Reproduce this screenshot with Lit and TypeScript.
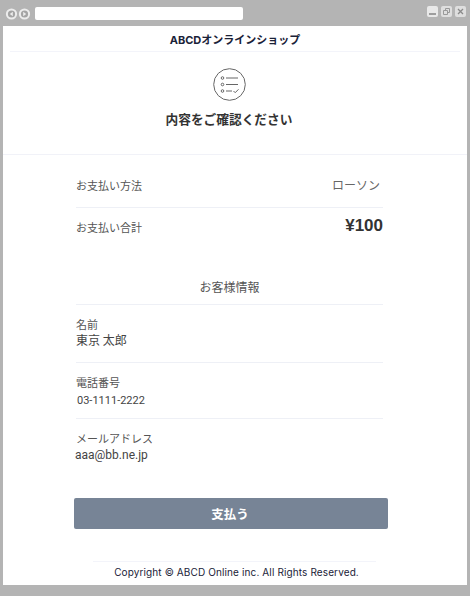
import { LitElement, html, css } from "lit";
import { customElement } from "lit/decorators.js";

@customElement("app-root")
export class AppRoot extends LitElement {
  static styles = css`
    :host { display: block; width: 470px; height: 596px; overflow: hidden; font-family: "Noto Sans CJK JP", "Liberation Sans", sans-serif; color: #555; }
    * { box-sizing: border-box; }
    .window { width: 470px; height: 596px; background: #b4b4b4; display: flex; flex-direction: column; padding: 0 3px 11px 3px; }
    .chrome { height: 26px; flex: none; display: flex; align-items: center; gap: 4px; padding: 1px 0 0 2px; }
    .nav { display: flex; gap: 0; }
    .nav svg { display: block; }
    .url { width: 208px; height: 13px; background: #fff; border-radius: 2px; }
    .ctrls { margin: -5px 0 0 auto; display: flex; gap: 3px; padding-right: 1px; }
    .ctrl { display: block; }
    .page { flex: 1; background: #fff; display: flex; flex-direction: column; min-height: 0; }
    .brand { height: 26px; margin: 0 7px; flex: none; border-bottom: 1px solid #f3f4fa; text-align: center; font: 700 11px/26px "Inter", "Noto Sans CJK JP", sans-serif; color: #1a2238; padding-top: 1px; }
    .hero { height: 103px; flex: none; border-bottom: 1px solid #f1f2f8; display: flex; flex-direction: column; align-items: center; padding: 16px 12px 0 0; }
    .hero svg { display: block; }
    .hero h1 { margin: 8px 0 0; font-size: 12.7px; line-height: 19px; font-weight: 700; color: #333; }
    .main { width: 307px; margin-left: 73px; flex: 1; display: flex; flex-direction: column; }
    .row { display: flex; justify-content: space-between; align-items: center; border-bottom: 1px solid #eef0f6; font-size: 11px; color: #555; }
    .row.one { height: 53px; padding: 7px 3px 0 0; }
    .row.one b { font-weight: 400; font-size: 12px; color: #666; }
    .row.two { height: 40px; border: 0; padding-bottom: 2px; }
    .row.two b { font: 700 17px/20px "Liberation Sans", sans-serif; color: #333; margin-top: -2px; }
    .sec { margin-top: 27px; height: 30px; border-bottom: 1px solid #eef0f6; text-align: center; font-size: 12px; line-height: 24px; color: #555; }
    .info { border-bottom: 1px solid #eef0f6; font-size: 12px; color: #444; padding-top: 12px; }
    .info .k { line-height: 15px; font-size: 11px; color: #555; }
    .info .v { line-height: 16px; }
    .info.a { height: 58px; }
    .info.b { height: 56px; padding-top: 11px; }
    .info.c { border: 0; height: 52px; padding-top: 11px; }
    .b .k, .c .k { line-height: 16px; }
    .b .v, .c .v { font: 11px/17px "Roboto", sans-serif; margin-top: 2px; color: #444; }
    .b .v { padding-left: 1px; }
    .c .v { font-size: 12px; margin: 1px 0 0 -1px; }
    .pay { width: 314px; height: 31px; margin: 27px 0 0 -2px; padding-right: 2px; border: 0; border-radius: 2px; background: #778496; color: #fff; font: 700 12.5px/31px "Noto Sans CJK JP", sans-serif; text-align: center; }
    .foot { margin: auto 0 0 90px; width: 283px; height: 24px; padding-left: 4px; flex: none; border-top: 1px solid #f3f4fa; text-align: center; font: 10px/21px "Inter", sans-serif; color: #1a2238; letter-spacing: .12px; }
  `;

  render() {
    return html`<div class="window">
      <div class="chrome">
        <div class="nav">
          <svg width="13" height="12" viewBox="0 0 13 12"><circle cx="6.5" cy="6" r="5.6" fill="#ececec"/><circle cx="6.5" cy="6" r="3.6" fill="#a4a4a4"/><path d="M7.8 3.8 4.8 6 7.8 8.2z" fill="#ececec"/></svg>
          <svg width="13" height="12" viewBox="0 0 13 12"><circle cx="6.5" cy="6" r="5.6" fill="#ececec"/><circle cx="6.5" cy="6" r="3.6" fill="#a4a4a4"/><path d="M5.2 3.8 8.2 6 5.2 8.2z" fill="#ececec"/></svg>
        </div>
        <div class="url"></div>
        <div class="ctrls">
          <svg class="ctrl" width="11" height="11" viewBox="0 0 11 11"><rect width="11" height="11" rx="2" fill="#e8e8e8"/><path d="M2 8h7" stroke="#8a8a8a" stroke-width="1.6"/></svg>
          <svg class="ctrl" width="11" height="11" viewBox="0 0 11 11"><rect width="11" height="11" rx="2" fill="#dedede"/><path d="M2.5 4.5h4v4h-4zM4.5 4.5v-2h4v4h-2" fill="none" stroke="#999"/></svg>
          <svg class="ctrl" width="11" height="11" viewBox="0 0 11 11"><rect width="11" height="11" rx="2" fill="#dedede"/><path d="M3 3l5 5M8 3l-5 5" stroke="#8a8a8a" stroke-width="1.3"/></svg>
        </div>
      </div>
      <div class="page">
        <div class="brand">ABCDオンラインショップ</div>
        <div class="hero">
          <svg width="33" height="33" viewBox="0 0 33 33" fill="none" stroke="#666">
            <circle cx="16.5" cy="16.5" r="15.8"/>
            <circle cx="9.5" cy="10" r="1.3"/><circle cx="9.5" cy="16.5" r="1.3"/><circle cx="9.5" cy="23" r="1.3"/>
            <path d="M13 10h12M13 16.5h12M13 23h6M20.5 23l1.7 1.7 3.3-3.4"/>
          </svg>
          <h1>内容をご確認ください</h1>
        </div>
        <div class="main">
          <div class="row one"><span>お支払い方法</span><b>ローソン</b></div>
          <div class="row two"><span>お支払い合計</span><b>¥100</b></div>
          <div class="sec">お客様情報</div>
          <div class="info a"><div class="k">名前</div><div class="v">東京 太郎</div></div>
          <div class="info b"><div class="k">電話番号</div><div class="v">03-1111-2222</div></div>
          <div class="info c"><div class="k">メールアドレス</div><div class="v">aaa@bb.ne.jp</div></div>
          <div class="pay">支払う</div>
        </div>
        <div class="foot">Copyright © ABCD Online inc. All Rights Reserved.</div>
      </div>
    </div>`;
  }
}
